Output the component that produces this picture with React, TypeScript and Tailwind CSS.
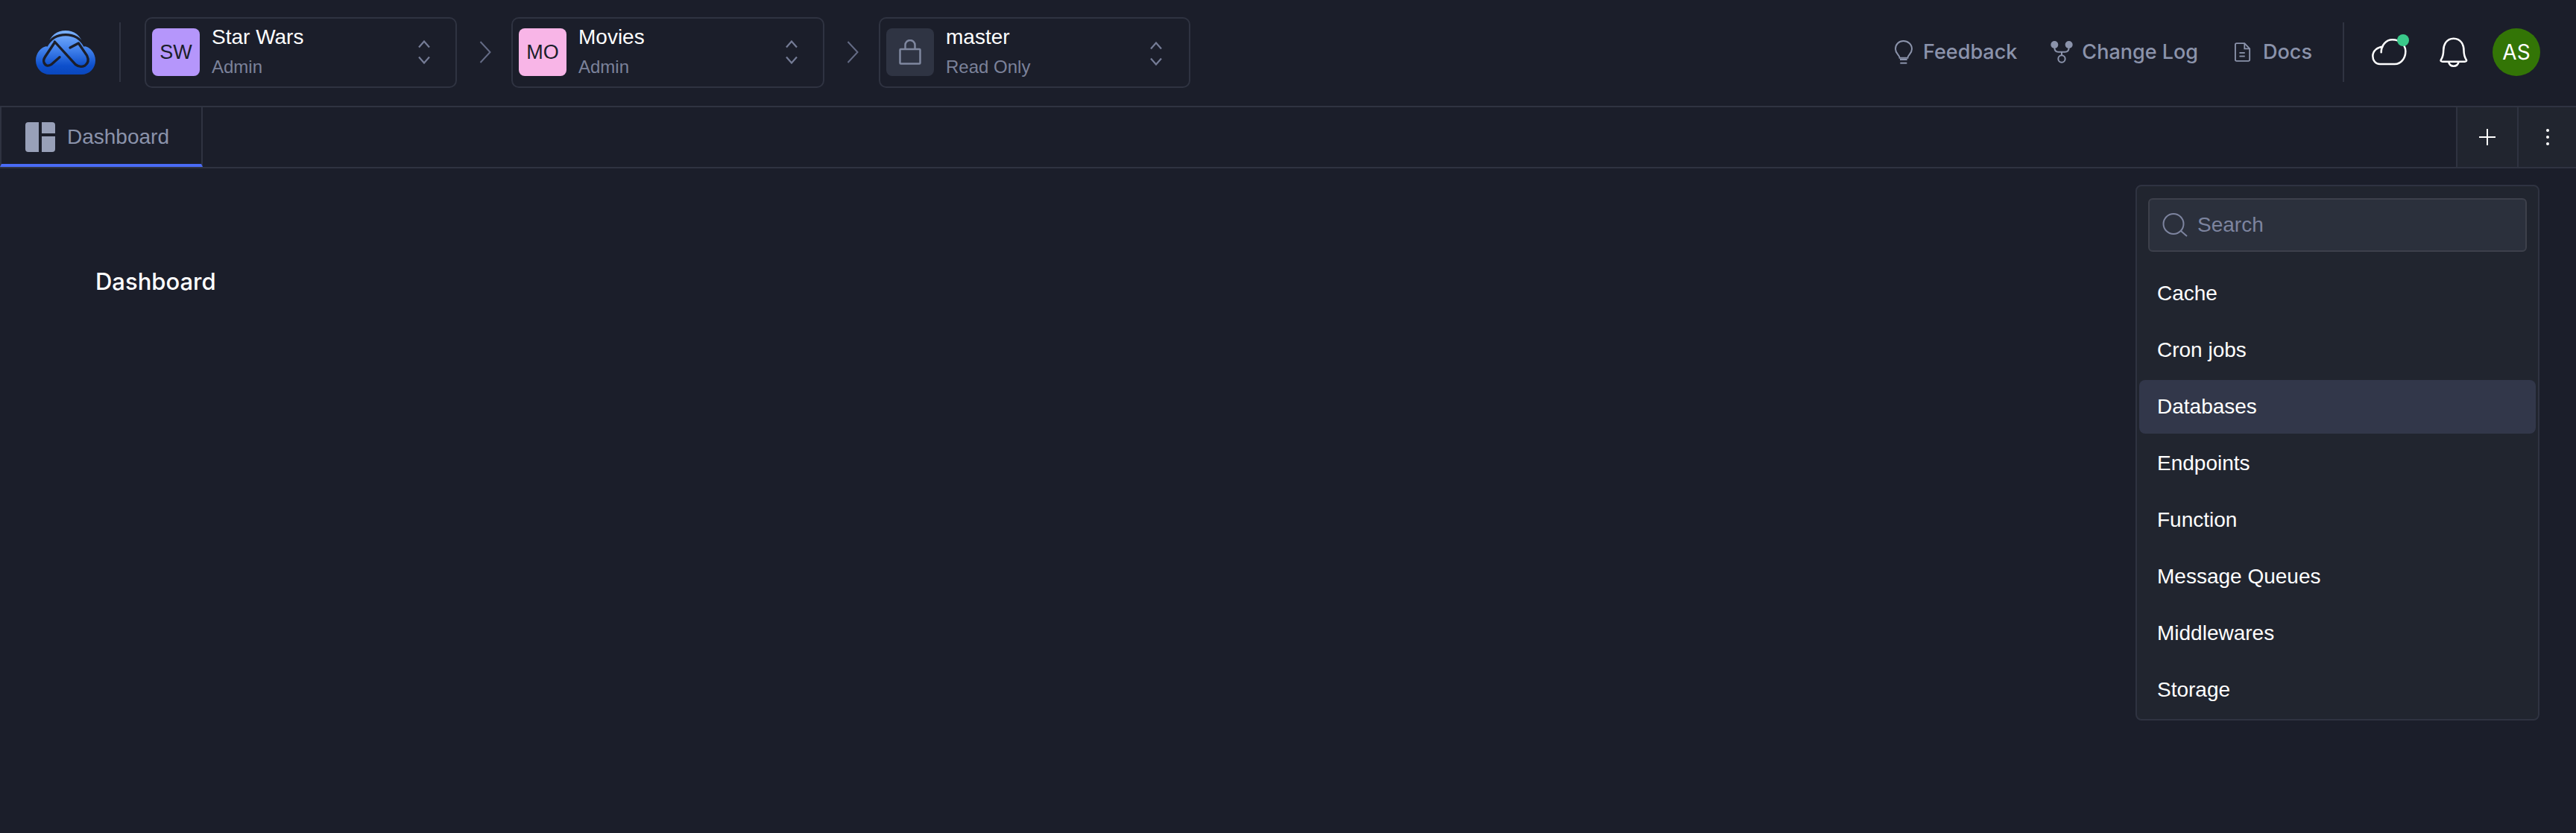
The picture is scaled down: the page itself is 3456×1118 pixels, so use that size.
const sans = "font-['Liberation_Sans',Arial,sans-serif]";

const Updown = ({ className = "" }: { className?: string }) => (
  <svg width="16" height="32" viewBox="0 0 16 32" fill="none" stroke="#757c96" strokeWidth="2.2" className={className}>
    <path d="M1 9.5 8 1.5l7 8" />
    <path d="M1 22.5l7 8 7-8" />
  </svg>
);

const Crumb = () => (
  <div className="flex w-[73px] shrink-0 justify-center pl-[3px]">
    <svg width="16" height="30" viewBox="0 0 16 30" fill="none" stroke="#646b85" strokeWidth="2">
      <path d="M1.5 1 14.5 15 1.5 29" />
    </svg>
  </div>
);

const Switcher = ({
  width,
  badge,
  title,
  subtitle,
  children,
  chevronClass = "",
}: {
  width: string;
  badge: string;
  title: string;
  subtitle: string;
  children: React.ReactNode;
  chevronClass?: string;
}) => (
  <div className={`flex h-[95px] shrink-0 items-center rounded-[10px] border-2 border-[#2f3341] pl-[8px] pr-[34px] ${width}`}>
    <div className={`flex h-[64px] w-[64px] shrink-0 items-center justify-center rounded-[8px] text-[27px] text-[#1b1e2a] ${badge}`}>
      {children}
    </div>
    <div className="ml-[16px] flex flex-1 flex-col">
      <span className="text-[28px] leading-[40px] text-white">{title}</span>
      <span className="text-[24px] leading-[40px] text-[#7b829a]">{subtitle}</span>
    </div>
    <Updown className={chevronClass} />
  </div>
);

const Logo = () => (
  <svg width="80" height="59" viewBox="84 95 240 177" fill="none">
    <defs>
      <linearGradient id="logoFill" x1="0" y1="0" x2="0" y2="1">
        <stop offset="0" stopColor="#7db3ff" />
        <stop offset="0.45" stopColor="#3f7fea" />
        <stop offset="0.8" stopColor="#0d4fcb" />
        <stop offset="1" stopColor="#0a47bd" />
      </linearGradient>
    </defs>
    <path
      d="M132 157 C140 115 170 95 204 95 C238 95 268 115 276 157 C304 160 324 186 324 215 C324 248 300 272 268 272 L140 272 C108 272 84 248 84 215 C84 186 104 160 132 157 Z"
      fill="url(#logoFill)"
    />
    <g stroke="#1b1e2a" strokeWidth="10" strokeLinecap="round" strokeLinejoin="round">
      <path d="M126 158 C145 125 175 112 204 112 C233 112 263 125 282 158" strokeLinecap="butt" />
      <path d="M180 202 146 232 Q126 244 117 224 Q113 214 122 200 L158 146" />
      <path d="M160 140 244 232 Q262 246 282 236 Q302 222 290 196 L256 146 L222 164" />
    </g>
  </svg>
);

const Bulb = () => (
  <svg width="24" height="32" viewBox="58 75 72 96" fill="none" stroke="#8b93ab" strokeWidth="6">
    <path d="M78 146C78 134 61 130 61 110 61 91 75 78 93 78s34 13 34 32c0 20-17 24-17 36z" />
    <path d="M79 153h29" />
    <path d="M80 167h27" />
  </svg>
);

const Branch = () => (
  <svg width="30" height="30" viewBox="690 78 90 90" fill="none" stroke="#8b93ab" strokeWidth="6">
    <circle cx="706" cy="93" r="15" fill="#8b93ab" stroke="none" />
    <circle cx="764" cy="93" r="15" fill="#8b93ab" stroke="none" />
    <path d="M706 104q0 18 16 18h26q16 0 16-18" />
    <path d="M735 122v14" />
    <circle cx="735" cy="150" r="14" />
  </svg>
);

const Doc = () => (
  <svg width="22" height="26" viewBox="0 0 24 28" fill="none" stroke="#8b93ab" strokeWidth="2">
    <path d="M14.500 1H3a2 2 0 0 0-2 2v22a2 2 0 0 0 2 2h17a2 2 0 0 0 2-2V9z" />
    <path d="M14.500 1v8H22" />
    <path d="M7 15h8" />
    <path d="M7 20h8" />
  </svg>
);

const CloudIcon = () => (
  <div className="relative h-[36px] w-[48px]">
    <svg width="48" height="36" viewBox="122 100 144 108" fill="none" stroke="#ffffff" strokeWidth="7.5" strokeLinecap="round">
      <path d="M160 155C160 125 180 104 205 104c30 0 53 21 53 46 0 30-20 52-43 52h-60c-20 0-29-17-29-32 0-22 20-37 40-38" />
    </svg>
    <div className="absolute right-[-2px] top-[-6px] h-[16px] w-[16px] rounded-full bg-[#3ac98a]" />
  </div>
);

const Bell = () => (
  <svg width="38" height="40" viewBox="400 92 113 120" fill="none" stroke="#ffffff" strokeWidth="7.5" strokeLinejoin="round">
    <path d="M456 97c-31 0-41 28-41 48 0 20-5 30-10 38-2 4 0 7 7 7h88c7 0 9-3 7-7-5-8-10-18-10-38 0-20-10-48-41-48z" />
    <path d="M436 192q4 16 20 16t20-16" />
  </svg>
);

const items = ["Cache", "Cron jobs", "Databases", "Endpoints", "Function", "Message Queues", "Middlewares", "Storage"];

export default function App() {
  return (
    <div className={`relative h-[1118px] w-[3456px] overflow-hidden bg-[#1b1e2a] ${sans}`}>
      <header className="flex h-[144px] items-center border-b-2 border-[#2f3341] pb-[2px] pl-[48px] pr-[48px]">
        <Logo />
        <div className="ml-[32px] mr-[32px] h-[80px] w-[2px] bg-[#2f3341]" />
        <Switcher width="w-[419px]" badge="bg-[#b596fb]" title="Star Wars" subtitle="Admin">
          SW
        </Switcher>
        <Crumb />
        <Switcher width="w-[420px]" badge="bg-[#f8b5e7]" title="Movies" subtitle="Admin">
          MO
        </Switcher>
        <Crumb />
        <Switcher width="w-[418px]" badge="bg-[#2f3443]" title="master" subtitle="Read Only" chevronClass="mr-[2px] mt-[4px]">
          <svg width="30" height="34" viewBox="0 0 30 34" fill="none" stroke="#7f879f" strokeWidth="2.500">
            <rect x="1.500" y="13" width="27" height="19.500" rx="1" />
            <path d="M8.500 13V7.500a6.500 6.500 0 0 1 13 0V13" />
          </svg>
        </Switcher>

        <div className="ml-auto flex items-center font-['Inter',sans-serif] text-[27px] font-medium text-[#8b93ab]">
          <Bulb />
          <span className="ml-[14px]">Feedback</span>
          <div className="ml-[45px]">
            <Branch />
          </div>
          <span className="ml-[12px]">Change Log</span>
          <div className="ml-[49px]">
            <Doc />
          </div>
          <span className="ml-[16px]">Docs</span>
          <div className="ml-[41px] mr-[37px] h-[80px] w-[2px] bg-[#2f3341]" />
          <CloudIcon />
          <div className="ml-[43px]">
            <Bell />
          </div>
          <div className="ml-[33px] flex h-[64px] w-[64px] items-center justify-center rounded-full bg-[#337506] text-[28px] font-normal text-white">
            AS
          </div>
        </div>
      </header>

      <div className="flex h-[82px] border-b-2 border-[#2f3341]">
        <div className="flex w-[272px] items-center border-x-2 border-[#2f3341] border-b-[4px] border-b-[#4a6bf5] pl-[32px] pt-[4px] text-[28px] text-[#8b93ab]">
          <svg width="40" height="40" viewBox="0 0 40 40" fill="#98a0b8" className="mr-[16px]">
            <path d="M4 0h14v40H4a4 4 0 0 1-4-4V4a4 4 0 0 1 4-4z" />
            <path d="M22 0h14a4 4 0 0 1 4 4v11H22z" />
            <path d="M22 19h18v17a4 4 0 0 1-4 4H22z" />
          </svg>
          Dashboard
        </div>
        <div className="ml-auto flex h-full">
          <div className="flex w-[82px] items-center justify-center border-l-2 border-[#2f3341] bg-[#21252f]">
            <svg width="24" height="24" viewBox="0 0 24 24" stroke="#ffffff" strokeWidth="2">
              <path d="M12 1v22M1 12h22" />
            </svg>
          </div>
          <div className="flex w-[79px] items-center justify-center border-l-2 border-[#2f3341] bg-[#21252f]">
            <svg width="4" height="22" viewBox="0 0 4 22" fill="#ffffff">
              <circle cx="2" cy="2" r="2" />
              <circle cx="2" cy="11" r="2" />
              <circle cx="2" cy="20" r="2" />
            </svg>
          </div>
        </div>
      </div>

      <main className="pl-[128px] pt-[132px]">
        <h1 className="font-['Inter',sans-serif] text-[31px] font-medium leading-[40px] text-white">Dashboard</h1>
      </main>

      <div className="absolute left-[2865px] top-[248px] w-[542px] rounded-[8px] border-2 border-[#2f3341] bg-[#21252f] px-[3px] pb-[3px] pt-[16px]">
        <div className="mx-[12px] flex h-[72px] items-center rounded-[6px] border-2 border-[#3d404b] bg-[#2b303c] pl-[17px]">
          <svg width="34" height="32" viewBox="0 0 34 32" fill="none" stroke="#7d849f" strokeWidth="2">
            <circle cx="15" cy="14.500" r="13.500" />
            <path d="M25 24l8 7" />
          </svg>
          <span className="ml-[13px] text-[28px] text-[#7d849f]">Search</span>
        </div>
        <ul className="mt-[20px] flex flex-col gap-[4px]">
          {items.map((item) => (
            <li
              key={item}
              className={`flex h-[72px] items-center rounded-[8px] pl-[24px] text-[28px] text-white ${item === "Databases" ? "bg-[#32374a]" : ""}`}
            >
              {item}
            </li>
          ))}
        </ul>
      </div>
    </div>
  );
}
